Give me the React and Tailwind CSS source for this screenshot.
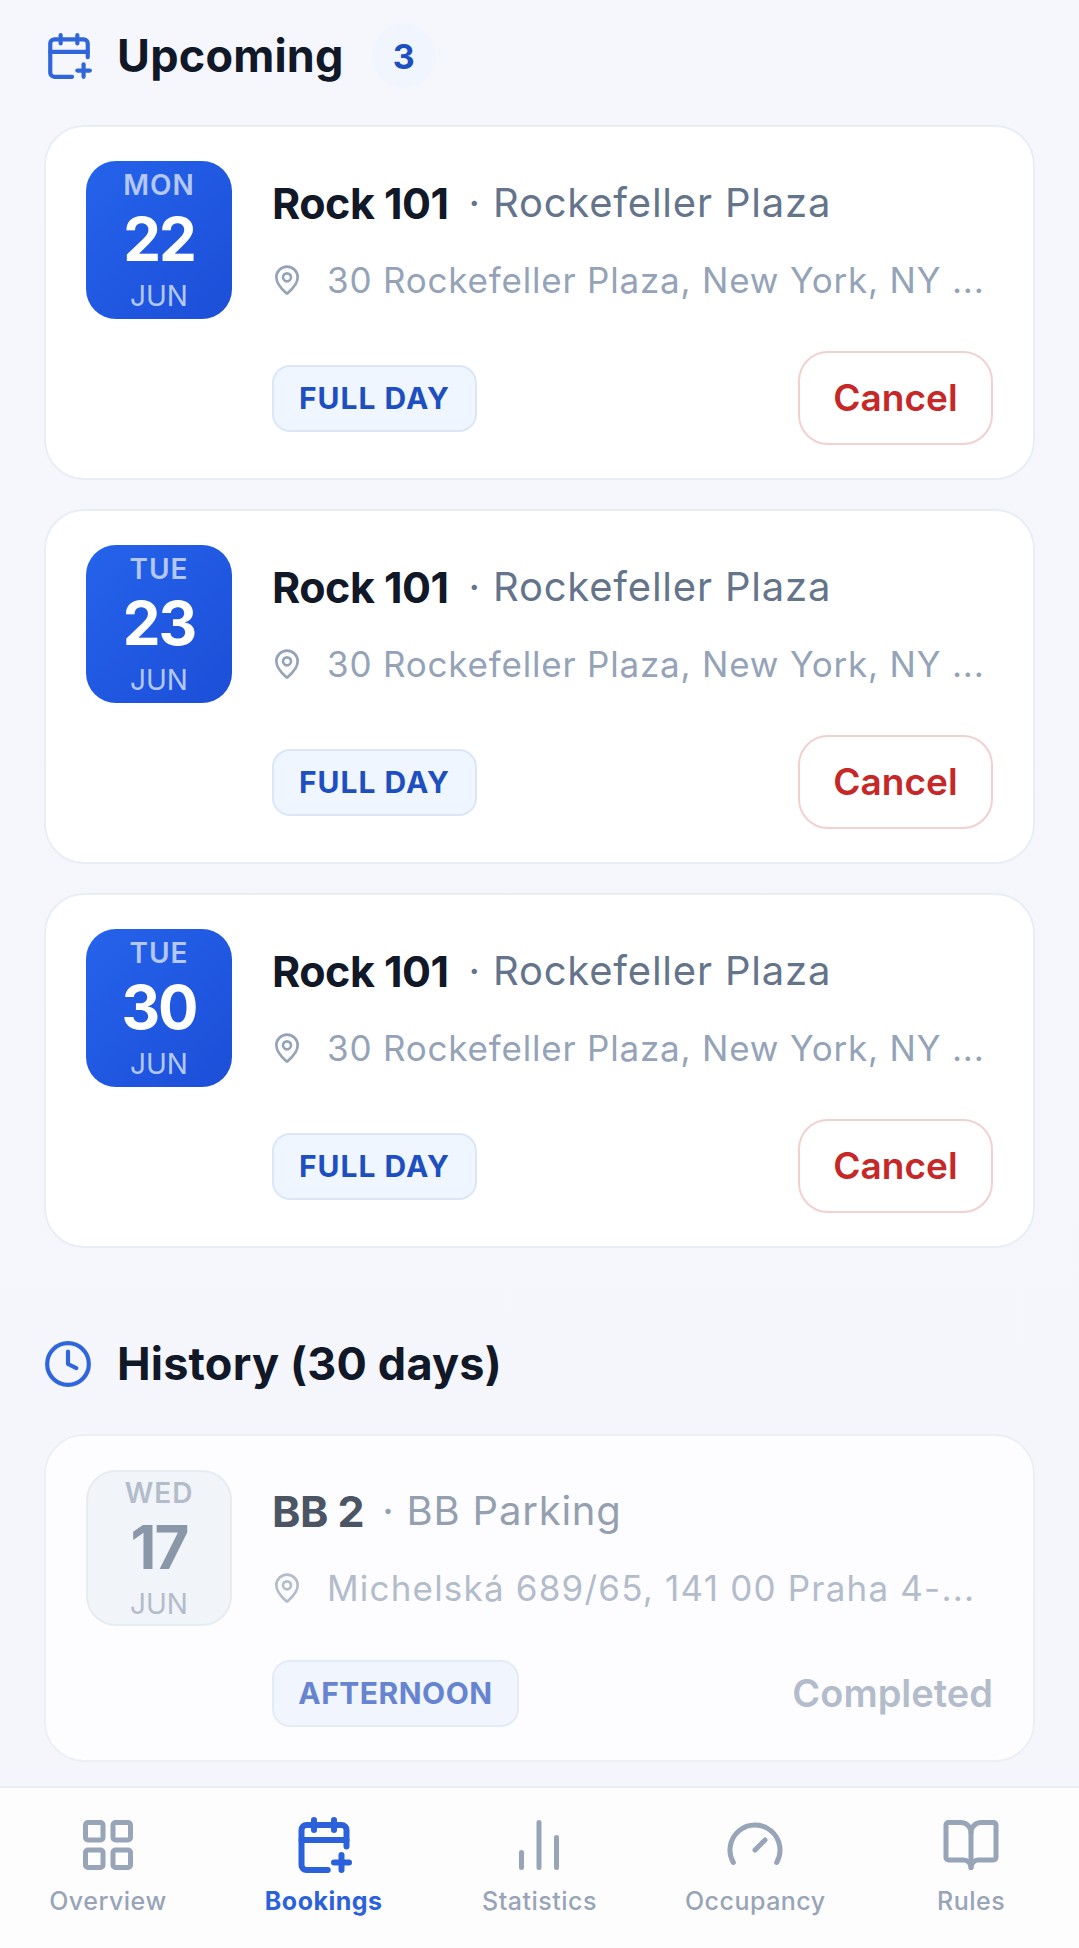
import { CalendarPlus, ChartNoAxesColumn, Clock, Gauge, BookOpen, LayoutGrid, MapPin } from 'lucide-react'

const upcoming = [
  { dow: 'MON', day: '22' },
  { dow: 'TUE', day: '23' },
  { dow: 'TUE', day: '30' },
]

const tabs = [
  { label: 'Overview', Icon: LayoutGrid },
  { label: 'Bookings', Icon: CalendarPlus, active: true },
  { label: 'Statistics', Icon: ChartNoAxesColumn },
  { label: 'Occupancy', Icon: Gauge },
  { label: 'Rules', Icon: BookOpen },
]

function UpcomingCard({ dow, day }) {
  return (
    <div className="flex gap-[40px] h-[355px] px-[40px] pt-[34px] bg-white border-2 border-[#e9edf5] rounded-[40px]">
      <div className="w-[146px] h-[158px] shrink-0 flex flex-col items-center rounded-[30px] bg-gradient-to-br from-[#2563eb] to-[#1d4ed8] text-white">
        <span className="mt-[6px] h-[36px] leading-[36px] text-[28px] font-semibold tracking-[1px] text-[#b4c8f7]">{dow}</span>
        <span className="h-[72px] leading-[72px] text-[60px] font-bold tracking-[-2px]">{day}</span>
        <span className="mt-[3px] h-[36px] leading-[36px] text-[28px] text-[#b4c8f7]">JUN</span>
      </div>
      <div className="flex-1 min-w-0">
        <div className="flex items-center h-[44px] mt-[20px] whitespace-nowrap">
          <span className="text-[43px] font-bold text-[#111827] tracking-[-0.5px]">Rock 101</span>
          <span className="ml-[20px] text-[40px] text-[#64748b] tracking-[0.8px]">· Rockefeller Plaza</span>
        </div>
        <div className="flex items-center gap-[24px] h-[44px] mt-[33px] text-[#94a3b8]">
          <MapPin size={32} strokeWidth={2} className="shrink-0 -ml-[1px]" />
          <span className="whitespace-nowrap text-[35px] tracking-[0.8px]">30 Rockefeller Plaza, New York, NY ...</span>
        </div>
        <div className="flex items-center justify-between mt-[49px]">
          <span className="flex items-center justify-center w-[205px] h-[67px] bg-[#eff6ff] border-2 border-[#dbe7f8] rounded-[18px] text-[#1e4fc0] text-[30px] font-bold tracking-[1px]">FULL DAY</span>
          <button className="w-[195px] h-[94px] bg-white border-2 border-[#f3d0d0] rounded-[30px] text-[#c62828] text-[37px] font-semibold">Cancel</button>
        </div>
      </div>
    </div>
  )
}

function HistoryCard() {
  return (
    <div className="flex gap-[40px] h-[328px] px-[40px] pt-[34px] bg-[#fdfdff] border-2 border-[#eceff6] rounded-[40px]">
      <div className="w-[146px] h-[156px] shrink-0 flex flex-col items-center rounded-[30px] bg-[#f1f4f8] border-2 border-[#e7ebf2]">
        <span className="mt-[3px] h-[36px] leading-[36px] text-[28px] font-semibold tracking-[1px] text-[#b3bccb]">WED</span>
        <span className="h-[72px] leading-[72px] text-[60px] font-bold tracking-[-2px] text-[#8a97a9]">17</span>
        <span className="mt-[3px] h-[36px] leading-[36px] text-[28px] text-[#b3bccb]">JUN</span>
      </div>
      <div className="flex-1 min-w-0">
        <div className="flex items-center h-[44px] mt-[19px] whitespace-nowrap">
          <span className="text-[43px] font-bold text-[#4b5563] tracking-[-0.5px]">BB 2</span>
          <span className="ml-[18px] text-[40px] text-[#94a0b0] tracking-[0.8px]">· BB Parking</span>
        </div>
        <div className="flex items-center gap-[24px] h-[44px] mt-[33px] text-[#b3bccb]">
          <MapPin size={32} strokeWidth={2} className="shrink-0 -ml-[1px]" />
          <span className="whitespace-nowrap text-[35px] tracking-[1.2px]">Michelská 689/65, 141 00 Praha 4-...</span>
        </div>
        <div className="flex items-center justify-between mt-[50px]">
          <span className="flex items-center justify-center w-[247px] h-[67px] bg-[#f1f6fe] border-2 border-[#e3ebf8] rounded-[18px] text-[#6684d0] text-[30px] font-bold tracking-[0.5px]">AFTERNOON</span>
          <span className="text-[#b3bccb] text-[38px] font-semibold">Completed</span>
        </div>
      </div>
    </div>
  )
}

export default function App() {
  return (
    <div className="h-[1948px] flex flex-col overflow-hidden bg-gradient-to-b from-[#f5f7fd] to-[#f4f6fc] font-['Inter',sans-serif]">
      <main className="flex-1 min-h-0 overflow-hidden px-[44px] pt-[21px]">
        <div className="flex items-center h-[70px] mb-[34px]">
          <CalendarPlus size={50} strokeWidth={2} className="text-[#2f66dc] shrink-0" />
          <h2 className="ml-[23px] text-[45px] font-bold text-[#111827] tracking-[0.2px]">Upcoming</h2>
          <span className="ml-[28px] w-[64px] h-[64px] flex items-center justify-center rounded-full bg-[#f1f5fe] text-[#1e4fc0] text-[34px] font-bold">3</span>
        </div>
        <div className="flex flex-col gap-[29px]">
          {upcoming.map((b) => <UpcomingCard key={b.day} {...b} />)}
        </div>
        <div className="flex items-center h-[70px] mt-[81px] mb-[35px]">
          <Clock size={50} strokeWidth={2} className="text-[#2f66dc] shrink-0 -ml-[1px]" />
          <h2 className="ml-[24px] text-[45px] font-bold text-[#111827] tracking-[0.2px]">History (30 days)</h2>
        </div>
        <HistoryCard />
      </main>
      <nav className="h-[162px] shrink-0 grid grid-cols-5 bg-[#fdfdfe] border-t-2 border-[#e9edf5]">
        {tabs.map(({ label, Icon, active }) => (
          <div key={label} className={`flex flex-col items-center pt-[27px] ${active ? 'text-[#2b62dc]' : 'text-[#98a4b7]'}`}>
            <Icon size={60} strokeWidth={active ? 2.4 : 2} />
            <span className={`mt-[8px] text-[25px] tracking-[0.5px] ${active ? 'font-bold' : 'font-medium'}`}>{label}</span>
          </div>
        ))}
      </nav>
    </div>
  )
}
